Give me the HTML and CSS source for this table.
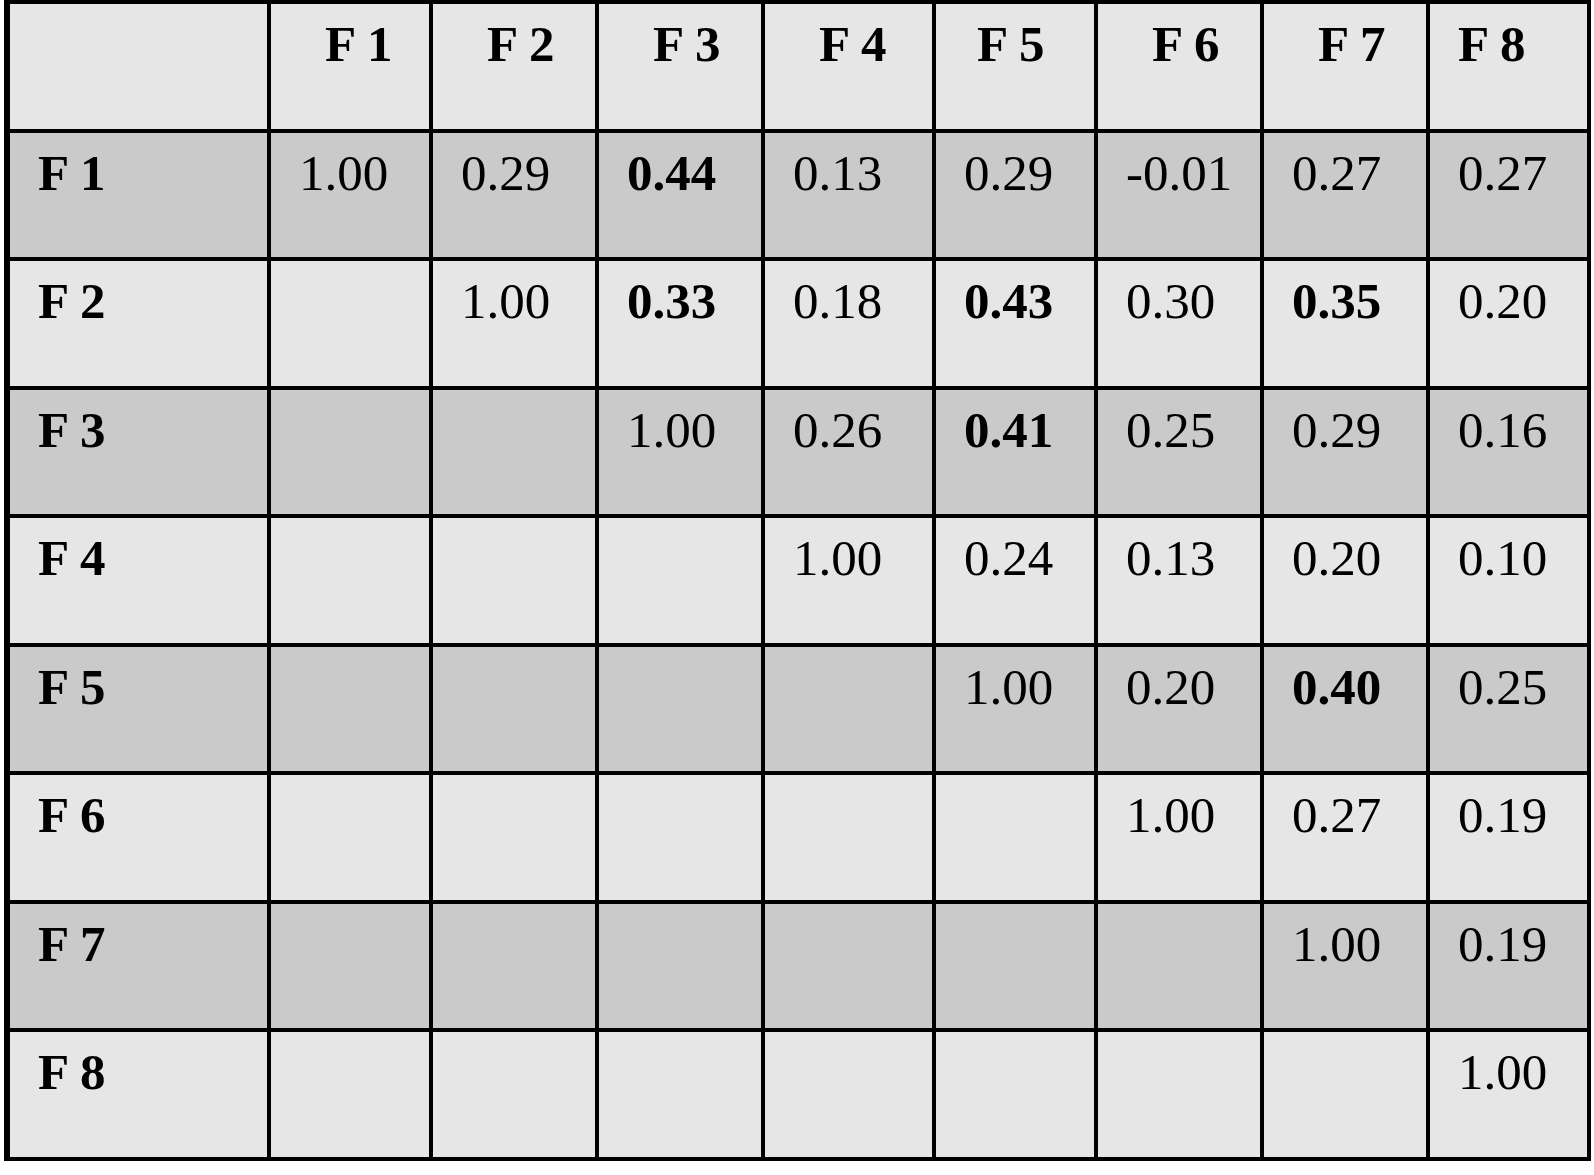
FILE: index.html
```html
<!DOCTYPE html>
<html lang="en">
<head>
  <meta charset="UTF-8" />
  <meta name="viewport" content="width=device-width, initial-scale=1.0" />
  <title>Factor Correlations</title>
  <link rel="stylesheet" href="styles.css">
</head>
<body>
  <!-- correlation matrix between factors -->
  <table class="corr-table">
    <colgroup>
      <col class="col-label">
      <col class="col-1">
      <col class="col-2">
      <col class="col-3">
      <col class="col-4">
      <col class="col-5">
      <col class="col-6">
      <col class="col-7">
      <col class="col-8">
    </colgroup>
    <tr class="head-row">
      <th></th>
      <th>F 1</th>
      <th>F 2</th>
      <th>F 3</th>
      <th>F 4</th>
      <th class="head-mid">F 5</th>
      <th>F 6</th>
      <th>F 7</th>
      <th class="head-near">F 8</th>
    </tr>
    <tr class="dark">
      <th>F 1</th>
      <td>1.00</td>
      <td>0.29</td>
      <td><b>0.44</b></td>
      <td>0.13</td>
      <td>0.29</td>
      <td>-0.01</td>
      <td>0.27</td>
      <td>0.27</td>
    </tr>
    <tr>
      <th>F 2</th>
      <td></td>
      <td>1.00</td>
      <td><b>0.33</b></td>
      <td>0.18</td>
      <td><b>0.43</b></td>
      <td>0.30</td>
      <td><b>0.35</b></td>
      <td>0.20</td>
    </tr>
    <tr class="dark">
      <th>F 3</th>
      <td></td>
      <td></td>
      <td>1.00</td>
      <td>0.26</td>
      <td><b>0.41</b></td>
      <td>0.25</td>
      <td>0.29</td>
      <td>0.16</td>
    </tr>
    <tr>
      <th>F 4</th>
      <td></td>
      <td></td>
      <td></td>
      <td>1.00</td>
      <td>0.24</td>
      <td>0.13</td>
      <td>0.20</td>
      <td>0.10</td>
    </tr>
    <tr class="dark">
      <th>F 5</th>
      <td></td>
      <td></td>
      <td></td>
      <td></td>
      <td>1.00</td>
      <td>0.20</td>
      <td><b>0.40</b></td>
      <td>0.25</td>
    </tr>
    <tr>
      <th>F 6</th>
      <td></td>
      <td></td>
      <td></td>
      <td></td>
      <td></td>
      <td>1.00</td>
      <td>0.27</td>
      <td>0.19</td>
    </tr>
    <tr class="dark">
      <th>F 7</th>
      <td></td>
      <td></td>
      <td></td>
      <td></td>
      <td></td>
      <td></td>
      <td>1.00</td>
      <td>0.19</td>
    </tr>
    <tr>
      <th>F 8</th>
      <td></td>
      <td></td>
      <td></td>
      <td></td>
      <td></td>
      <td></td>
      <td></td>
      <td>1.00</td>
    </tr>
  </table>
</body>
</html>
```

FILE: styles.css
```css
/* page basics */
body {
  margin: 0;
  padding: 0;
  background: #fff;
  color: #000;
  font-family: 'Liberation Serif', 'Times New Roman', serif;
}

/* matrix table */
.corr-table {
  margin: 0 0 0 4px;
  border-collapse: collapse;
  table-layout: fixed;
  width: 1586px;
  border-left: 6px solid #000;
}
.col-label { width: 262px; }
.col-1 { width: 162px; }
.col-2 { width: 166px; }
.col-3 { width: 166px; }
.col-4 { width: 171px; }
.col-5 { width: 162px; }
.col-6 { width: 166px; }
.col-7 { width: 166px; }
.col-8 { width: 161px; }

.corr-table th,
.corr-table td {
  height: 128.5px;
  box-sizing: border-box;
  border: 4px solid #000;
  padding: 11px 0 0 28px;
  vertical-align: top;
  text-align: left;
  font-size: 51px;
  line-height: 1.15;
  font-weight: normal;
  background: #e6e6e6;
  white-space: nowrap;
}
.corr-table th {
  font-weight: bold;
}
.corr-table b {
  font-weight: bold;
}

/* header row labels sit further in */
.head-row th {
  padding-left: 54px;
}
.head-row th.head-mid {
  padding-left: 41px;
}
.head-row th.head-near {
  padding-left: 28px;
}

/* alternating row shade */
.dark th,
.dark td {
  background: #cacaca;
}
```
